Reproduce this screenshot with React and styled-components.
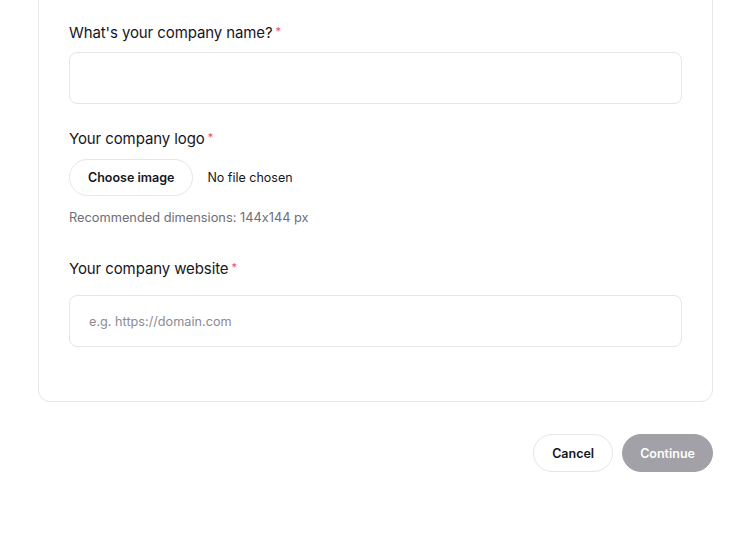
import styled, { createGlobalStyle } from "styled-components";

const GlobalStyle = createGlobalStyle`
  html, body {
    margin: 0;
    background: #ffffff;
    font-family: "Inter", "Liberation Sans", sans-serif;
    font-feature-settings: "calt" 0;
    color: #16161d;
  }
  * { box-sizing: border-box; }
`;

const Page = styled.div`
  width: 753px;
  height: 556px;
  overflow: hidden;
  padding: 0 40px 0 38px;
`;

const Card = styled.div`
  margin-top: -40px;
  border: 1px solid #e6e6e9;
  border-radius: 12px;
  padding: 62px 30px 54px 30px;
  display: flex;
  flex-direction: column;
`;

const Field = styled.div`
  display: flex;
  flex-direction: column;
  margin-bottom: ${(p) => p.$after || 0}px;
`;

const Label = styled.label`
  font-size: 15px;
  line-height: 20px;
  font-weight: 400;
  color: #16161d;
  letter-spacing: -0.1px;
  margin-bottom: ${(p) => p.$gap}px;
`;

const Star = styled.span`
  color: #ef4e5a;
  font-size: 11px;
  vertical-align: top;
  margin-left: 3px;
  position: relative;
  top: -2px;
`;

const Input = styled.input`
  width: 100%;
  height: 52px;
  border: 1px solid #e6e6e9;
  border-radius: 8px;
  padding: 0 19px;
  font-family: inherit;
  font-feature-settings: "calt" 0;
  font-size: 12.7px;
  color: #16161d;
  outline: none;
  &::placeholder {
    color: #8b8b94;
  }
`;

const FileRow = styled.div`
  display: flex;
  align-items: center;
  gap: 14px;
`;

const PillButton = styled.button`
  height: ${(p) => p.$h || 37}px;
  padding: 0 ${(p) => p.$px || 20}px;
  border-radius: 999px;
  border: 1px solid ${(p) => (p.$primary ? "#a1a1a7" : "#e6e6e9")};
  background: ${(p) => (p.$primary ? "#a1a1a7" : "#ffffff")};
  color: ${(p) => (p.$primary ? "#ffffff" : "#16161d")};
  font-family: inherit;
  font-size: 12.5px;
  font-weight: 600;
  cursor: pointer;
`;

const FileName = styled.span`
  font-size: 12.5px;
  color: #16161d;
`;

const Hint = styled.div`
  margin-top: 14px;
  font-size: 12.8px;
  color: #6e6e78;
`;

const Actions = styled.div`
  display: flex;
  justify-content: flex-end;
  gap: 9px;
  margin-top: 32px;
`;

export default function App() {
  return (
    <>
      <GlobalStyle />
      <Page>
        <Card>
          <Field $after={25}>
            <Label $gap={9}>
              What's your company name?<Star>*</Star>
            </Label>
            <Input type="text" />
          </Field>
          <Field $after={34}>
            <Label $gap={10}>
              Your company logo<Star>*</Star>
            </Label>
            <FileRow>
              <PillButton $h={37} $px={18}>Choose image</PillButton>
              <FileName>No file chosen</FileName>
            </FileRow>
            <Hint>Recommended dimensions: 144x144 px</Hint>
          </Field>
          <Field>
            <Label $gap={16}>
              Your company website<Star>*</Star>
            </Label>
            <Input type="text" placeholder="e.g. https://domain.com" />
          </Field>
        </Card>
        <Actions>
          <PillButton $h={38} $px={18}>Cancel</PillButton>
          <PillButton $h={38} $px={17} $primary>Continue</PillButton>
        </Actions>
      </Page>
    </>
  );
}
